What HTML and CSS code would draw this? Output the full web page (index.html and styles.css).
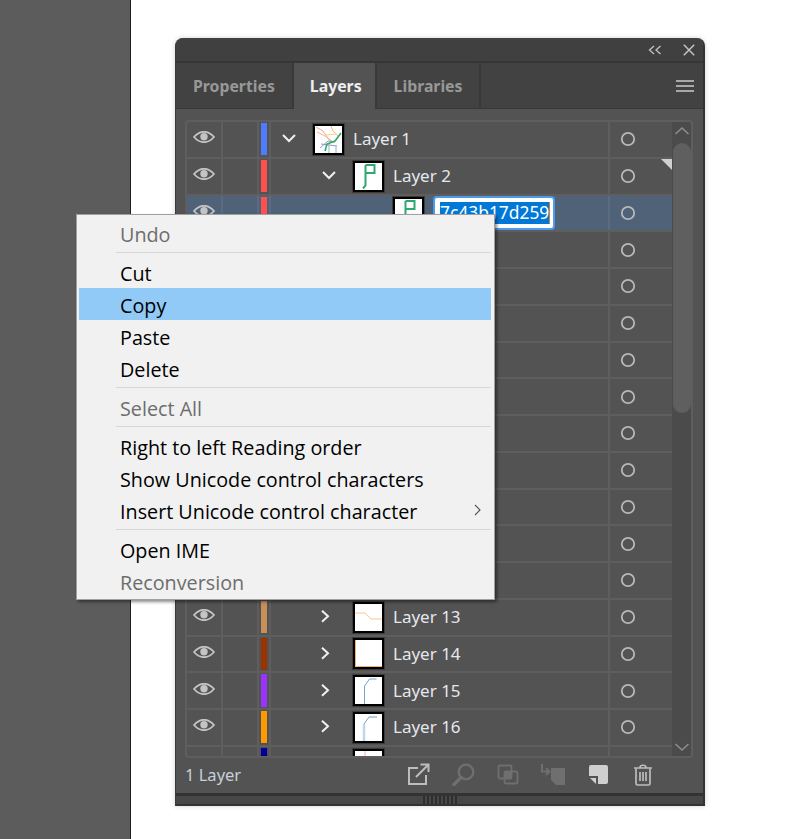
FILE: index.html
```html
<!DOCTYPE html>
<html lang="en">
<head>
  <meta charset="UTF-8">
  <meta name="viewport" content="width=device-width, initial-scale=1.0">
  <title>Layers panel</title>
  <link rel="stylesheet" href="styles.css">
</head>
<body>
  <svg class="defs" width="0" height="0">
    <symbol id="eye" viewBox="0 0 22 12">
      <path d="M1 6C5 1.500 8 .8 11 .8S17 1.500 21 6c-4 4.500-7 5.200-10 5.200S5 10.500 1 6z" fill="none" stroke="currentColor" stroke-width="1.800"/>
      <circle cx="11" cy="5.800" r="3.700" fill="currentColor"/>
    </symbol>
    <symbol id="target" viewBox="0 0 16 16">
      <circle cx="8" cy="8" r="6.200" fill="none" stroke="currentColor" stroke-width="1.800"/>
    </symbol>
    <symbol id="down" viewBox="0 0 24 14">
      <path d="M6 3l6 6 6-6" fill="none" stroke="currentColor" stroke-width="2"/>
    </symbol>
    <symbol id="right" viewBox="0 0 24 14">
      <path d="M5 .7l6 5.500-6 5.500" fill="none" stroke="currentColor" stroke-width="2"/>
    </symbol>
    <symbol id="flag" viewBox="0 0 27 27">
      <path d="M8 25.500l2.500-3V2M10.500 2h9v8h-9" fill="none" stroke="#2fa86c" stroke-width="2"/>
    </symbol>
  </svg>

  <aside class="sidebar"></aside>

  <main class="stage">
    <section class="panel">
      <header class="titlebar">
        <svg class="title-icon" width="14" height="10" viewBox="0 0 14 10"><path d="M6 1L1.500 5 6 9M12.500 1L8 5l4.500 4" fill="none" stroke="#c4c4c4" stroke-width="1.300"/></svg>
        <svg class="title-icon" width="12" height="12" viewBox="0 0 12 12"><path d="M.8.8l10.400 10.400M11.200.8L.8 11.200" fill="none" stroke="#c4c4c4" stroke-width="1.500"/></svg>
      </header>

      <nav class="tabs">
        <div class="tab">Properties</div>
        <div class="tab active">Layers</div>
        <div class="tab">Libraries</div>
        <div class="tab-menu"><span></span><span></span><span></span></div>
      </nav>

      <div class="panel-body">
        <div class="list">
          <div class="rows">
            <div class="row">
              <div class="cell eye"><svg><use href="#eye"/></svg></div>
              <div class="cell lock"></div>
              <div class="cell bar"><i style="background:#4f7cff"></i></div>
              <div class="cell name lvl-0">
                <svg class="twist"><use href="#down"/></svg>
                <div class="thumb">
                  <svg viewBox="0 0 27 27" fill="none" stroke-width="1">
                    <path d="M1 1l7 4 7 10 5 1" stroke="#f2a898"/>
                    <path d="M2 6l8 4 7 5" stroke="#f5b48a"/>
                    <path d="M16 0l2 5 5 5" stroke="#f7be6d"/>
                    <path d="M10 9l12-1" stroke="#f5d58a"/>
                    <path d="M5 22l8-7 7 1" stroke="#7fa8d8"/>
                    <path d="M6 18l16 2" stroke="#a58cc8"/>
                    <path d="M14 27v-9" stroke="#7fc8a8"/>
                    <path d="M21 27v-7" stroke="#7fb8d8"/>
                    <path d="M26 7l-6 8-8 3-2 7" stroke="#2fa86c" stroke-width="1.600"/>
                  </svg>
                </div>
                <span class="label">Layer 1</span>
              </div>
              <div class="cell target"><svg><use href="#target"/></svg></div>
            </div>
            <div class="row">
              <div class="cell eye"><svg><use href="#eye"/></svg></div>
              <div class="cell lock"></div>
              <div class="cell bar"><i style="background:#ff4f4f"></i></div>
              <div class="cell name lvl-1">
                <svg class="twist"><use href="#down"/></svg>
                <div class="thumb"><svg><use href="#flag"/></svg></div>
                <span class="label">Layer 2</span>
              </div>
              <div class="cell target has-art"><svg><use href="#target"/></svg></div>
            </div>
            <div class="row selected">
              <div class="cell eye"><svg><use href="#eye"/></svg></div>
              <div class="cell lock"></div>
              <div class="cell bar"><i style="background:#ff4f4f"></i></div>
              <div class="cell name lvl-2">
                <div class="thumb"><svg><use href="#flag"/></svg></div>
                <span class="rename"><span class="rename-text">7c43b17d259</span></span>
              </div>
              <div class="cell target"><svg><use href="#target"/></svg></div>
            </div>
            <div class="row"><div class="cell eye"></div><div class="cell lock"></div><div class="cell bar"></div><div class="cell name"></div><div class="cell target"><svg><use href="#target"/></svg></div></div>
            <div class="row"><div class="cell eye"></div><div class="cell lock"></div><div class="cell bar"></div><div class="cell name"></div><div class="cell target"><svg><use href="#target"/></svg></div></div>
            <div class="row"><div class="cell eye"></div><div class="cell lock"></div><div class="cell bar"></div><div class="cell name"></div><div class="cell target"><svg><use href="#target"/></svg></div></div>
            <div class="row"><div class="cell eye"></div><div class="cell lock"></div><div class="cell bar"></div><div class="cell name"></div><div class="cell target"><svg><use href="#target"/></svg></div></div>
            <div class="row"><div class="cell eye"></div><div class="cell lock"></div><div class="cell bar"></div><div class="cell name"></div><div class="cell target"><svg><use href="#target"/></svg></div></div>
            <div class="row"><div class="cell eye"></div><div class="cell lock"></div><div class="cell bar"></div><div class="cell name"></div><div class="cell target"><svg><use href="#target"/></svg></div></div>
            <div class="row"><div class="cell eye"></div><div class="cell lock"></div><div class="cell bar"></div><div class="cell name"></div><div class="cell target"><svg><use href="#target"/></svg></div></div>
            <div class="row"><div class="cell eye"></div><div class="cell lock"></div><div class="cell bar"></div><div class="cell name"></div><div class="cell target"><svg><use href="#target"/></svg></div></div>
            <div class="row"><div class="cell eye"></div><div class="cell lock"></div><div class="cell bar"></div><div class="cell name"></div><div class="cell target"><svg><use href="#target"/></svg></div></div>
            <div class="row"><div class="cell eye"></div><div class="cell lock"></div><div class="cell bar"></div><div class="cell name"></div><div class="cell target"><svg><use href="#target"/></svg></div></div>
            <div class="row">
              <div class="cell eye"><svg><use href="#eye"/></svg></div>
              <div class="cell lock"></div>
              <div class="cell bar"><i style="background:#c89058"></i></div>
              <div class="cell name lvl-1">
                <svg class="twist"><use href="#right"/></svg>
                <div class="thumb"><svg viewBox="0 0 27 27"><path d="M0 9h10l6 6h11" fill="none" stroke="#f5c98a"/></svg></div>
                <span class="label">Layer 13</span>
              </div>
              <div class="cell target"><svg><use href="#target"/></svg></div>
            </div>
            <div class="row">
              <div class="cell eye"><svg><use href="#eye"/></svg></div>
              <div class="cell lock"></div>
              <div class="cell bar"><i style="background:#993300"></i></div>
              <div class="cell name lvl-1">
                <svg class="twist"><use href="#right"/></svg>
                <div class="thumb"><svg viewBox="0 0 27 27"><path d="M.5 0v26.500H27" fill="none" stroke="#f5b461"/></svg></div>
                <span class="label">Layer 14</span>
              </div>
              <div class="cell target"><svg><use href="#target"/></svg></div>
            </div>
            <div class="row">
              <div class="cell eye"><svg><use href="#eye"/></svg></div>
              <div class="cell lock"></div>
              <div class="cell bar"><i style="background:#9933ff"></i></div>
              <div class="cell name lvl-1">
                <svg class="twist"><use href="#right"/></svg>
                <div class="thumb"><svg viewBox="0 0 27 27"><path d="M9.500 27V9l5-7h7" fill="none" stroke="#6fa3d0"/></svg></div>
                <span class="label">Layer 15</span>
              </div>
              <div class="cell target"><svg><use href="#target"/></svg></div>
            </div>
            <div class="row">
              <div class="cell eye"><svg><use href="#eye"/></svg></div>
              <div class="cell lock"></div>
              <div class="cell bar"><i style="background:#ff9900"></i></div>
              <div class="cell name lvl-1">
                <svg class="twist"><use href="#right"/></svg>
                <div class="thumb"><svg viewBox="0 0 27 27"><path d="M9 27V10" fill="none" stroke="#bcd6ea" stroke-width="2.500"/><path d="M9 10l5-7h8" fill="none" stroke="#6fa3d0"/></svg></div>
                <span class="label">Layer 16</span>
              </div>
              <div class="cell target"><svg><use href="#target"/></svg></div>
            </div>
            <div class="row">
              <div class="cell eye"><svg><use href="#eye"/></svg></div>
              <div class="cell lock"></div>
              <div class="cell bar"><i style="background:#000099"></i></div>
              <div class="cell name lvl-1">
                <svg class="twist"><use href="#right"/></svg>
                <div class="thumb"><svg viewBox="0 0 27 27"><path d="M10 0v27" fill="none" stroke="#efb0cf"/></svg></div>
              </div>
              <div class="cell target"><svg><use href="#target"/></svg></div>
            </div>
          </div>
          <div class="scrollbar">
            <svg class="scroll-arrow" width="16" height="10" viewBox="0 0 16 10"><path d="M1.500 8L8 2l6.500 6" fill="none" stroke="#8d8d8d" stroke-width="1.600"/></svg>
            <div class="scroll-thumb"></div>
            <svg class="scroll-arrow scroll-down" width="16" height="10" viewBox="0 0 16 10"><path d="M1.500 2L8 8l6.500-6" fill="none" stroke="#8d8d8d" stroke-width="1.600"/></svg>
          </div>
        </div>

        <footer class="footer">
          <span class="count">1 Layer</span>
          <div class="tools">
            <svg class="tool" viewBox="0 0 24 24" fill="none" stroke="#bdbdbd" stroke-width="2"><path d="M12 6H3v16h17v-9"/><path d="M10 15L22 3M14.500 2.500H22.500V10"/></svg>
            <svg class="tool" viewBox="0 0 24 24" fill="none" stroke="#6f6f6f"><circle cx="15" cy="10" r="7.300" stroke-width="2.300"/><path d="M10 15.500L3 22.500" stroke-width="3.400" stroke-linecap="round"/></svg>
            <svg class="tool" viewBox="0 0 24 24" fill="none" stroke="#6f6f6f" stroke-width="1.800"><rect x="2.500" y="3.500" width="13" height="13" rx="1.500"/><rect x="8.500" y="9.500" width="13" height="12" rx="1.500"/><rect x="8" y="9" width="8" height="8" fill="#6f6f6f" stroke="none"/></svg>
            <svg class="tool" viewBox="0 0 24 24"><path d="M10 6h14v17H15l-5-5z" fill="#6f6f6f"/><path d="M1 2v7.500h7M5 6l3.500 3.500L5 13" fill="none" stroke="#6f6f6f" stroke-width="2"/></svg>
            <svg class="tool" viewBox="0 0 24 24"><path d="M5 3h15a2 2 0 012 2v15a2 2 0 01-2 2H12V14H3V5a2 2 0 012-2z" fill="#cfcfcf"/><path d="M4 16h6v6z" fill="#cfcfcf"/></svg>
            <svg class="tool" viewBox="0 0 24 24" fill="none" stroke="#bdbdbd" stroke-width="1.700"><path d="M3 6h18M9 5.500c0-3 6-3 6 0"/><path d="M5 6.500v15a1.500 1.500 0 001.500 1.500h11a1.500 1.500 0 001.500-1.500v-15"/><path d="M9 10v9M12 10v9M15 10v9"/></svg>
          </div>
        </footer>
      </div>

      <div class="grip-bar"><div class="grip"></div></div>
    </section>
  </main>

  <div class="menu">
    <div class="menu-item disabled">Undo</div>
    <div class="menu-sep"></div>
    <div class="menu-item">Cut</div>
    <div class="menu-item hover">Copy</div>
    <div class="menu-item">Paste</div>
    <div class="menu-item">Delete</div>
    <div class="menu-sep"></div>
    <div class="menu-item disabled">Select All</div>
    <div class="menu-sep"></div>
    <div class="menu-item">Right to left Reading order</div>
    <div class="menu-item">Show Unicode control characters</div>
    <div class="menu-item">Insert Unicode control character
      <svg class="menu-arrow" width="7" height="12" viewBox="0 0 7 12"><path d="M1 1l5 5-5 5" fill="none" stroke="#555" stroke-width="1.100"/></svg>
    </div>
    <div class="menu-sep"></div>
    <div class="menu-item">Open IME</div>
    <div class="menu-item disabled">Reconversion</div>
  </div>
</body>
</html>
```

FILE: styles.css
```css
* {
  box-sizing: border-box;
}
body {
  margin: 0;
  height: 839px;
  display: flex;
  background: #fff;
  overflow: hidden;
  font-family: "Noto Sans", Arial, sans-serif;
}
.defs {
  position: absolute;
}
.sidebar {
  width: 131px;
  background: #5c5c5c;
  border-right: 1px solid #1e1e1e;
}
.stage {
  padding: 38px 0 0 44px;
}

/* panel */
.panel {
  width: 530px;
  height: 768px;
  display: flex;
  flex-direction: column;
  background: #535353;
  border-left: 1px solid #3a3a3a;
  border-right: 2px solid #333;
  border-radius: 8px 8px 0 0;
  box-shadow: 0 0 5px rgba(0, 0, 0, 0.18);
}
.titlebar {
  height: 25px;
  flex: none;
  display: flex;
  justify-content: flex-end;
  align-items: center;
  gap: 21px;
  padding: 0 8px 0 0;
  background: #404040;
  border-bottom: 2px solid #363636;
  border-radius: 8px 8px 0 0;
}
.tabs {
  height: 46px;
  flex: none;
  display: flex;
  background: #424242;
}
.tab {
  padding: 0 17px;
  display: flex;
  align-items: center;
  font-size: 15.800px;
  font-weight: 700;
  color: #989898;
  border-right: 2px solid #393939;
  border-bottom: 1px solid #383838;
}
.tab.active {
  padding: 0 13px 0 16px;
  background: #535353;
  color: #eee;
  border-bottom: none;
}
.tab-menu {
  flex: 1;
  display: flex;
  flex-direction: column;
  align-items: flex-end;
  justify-content: center;
  gap: 3px;
  padding-right: 9px;
  border-bottom: 1px solid #383838;
}
.tab-menu span {
  width: 18px;
  height: 2px;
  background: #a8a8a8;
}
.panel-body {
  flex: 1;
  padding: 11px 10px 0 9px;
  display: flex;
  flex-direction: column;
}

/* layer list */
.list {
  height: 638px;
  flex: none;
  display: flex;
  border: 2px solid #5e5e5e;
  border-radius: 4px;
  overflow: hidden;
}
.rows {
  width: 485px;
  flex: none;
}
.row {
  height: 36.750px;
  display: grid;
  grid-template-columns: 36px 36px 12px 339px 62px;
  border-bottom: 2px solid #5e5e5e;
}
.row.selected {
  background: #4f6277;
}
.cell {
  border-right: 2px solid #5e5e5e;
  display: flex;
  align-items: center;
  min-width: 0;
}
.row.selected .cell {
  border-right-color: #5b6c80;
}
.cell.eye {
  justify-content: center;
  padding: 0 0 4px 0;
  color: #c4c4c4;
}
.cell.eye svg {
  width: 22px;
  height: 12px;
}
.cell.bar {
  padding: 1px 0 1.500px 2px;
  align-items: stretch;
}
.cell.bar i {
  width: 6px;
  display: block;
}
.cell.target {
  position: relative;
  border-right: none;
  padding-left: 10px;
  color: #b8b8b8;
}
.cell.target svg {
  width: 16px;
  height: 16px;
}
.has-art::after {
  content: "";
  position: absolute;
  top: 0;
  right: 0;
  border-style: solid;
  border-width: 0 11px 11px 0;
  border-color: transparent #d0d0d0 transparent transparent;
}
.name.lvl-0 {
  padding-left: 6px;
}
.name.lvl-1 {
  padding-left: 46px;
}
.name.lvl-2 {
  padding-left: 122px;
}
.twist {
  width: 24px;
  height: 14px;
  flex: none;
  margin-right: 12px;
  color: #f0f0f0;
}
.thumb {
  width: 31px;
  height: 31px;
  flex: none;
  background: #fff;
  border: 2px solid #000;
  outline: 1px solid #3c3c3c;
}
.thumb svg {
  width: 27px;
  height: 27px;
  display: block;
}
.label {
  margin: 0 0 1px 9px;
  font-size: 17px;
  color: #e4e8ee;
  white-space: nowrap;
}
.rename {
  margin-left: 9px;
  width: 122px;
  height: 34px;
  padding: 3px 3px 3px 5px;
  display: flex;
  align-items: center;
  background: #fff;
  border: 2px solid #4c9bea;
  border-radius: 4px;
  overflow: hidden;
}
.rename-text {
  height: 22px;
  line-height: 21px;
  background: #0078d7;
  border-right: 1px solid #e07a20;
  color: #fff;
  font-size: 17.400px;
  white-space: nowrap;
}

/* scrollbar */
.scrollbar {
  flex: 1;
  display: flex;
  flex-direction: column;
  align-items: center;
  background: #4b4b4b;
  padding-top: 4px;
}
.scroll-thumb {
  width: 18px;
  height: 270px;
  margin-top: 7px;
  background: #5f5f5f;
  border-radius: 9px;
}
.scroll-down {
  margin-top: auto;
  margin-bottom: 4px;
}

/* footer */
.footer {
  height: 35px;
  flex: none;
  display: flex;
  align-items: center;
  justify-content: space-between;
  padding: 0 38px 3px 0;
  font-size: 16.500px;
  color: #c8d0d8;
}
.tools {
  display: flex;
  gap: 21px;
}
.tool {
  width: 24px;
  height: 24px;
}
.grip-bar {
  height: 13px;
  flex: none;
  background: #474747;
  border-top: 3px solid #333;
  border-bottom: 2px solid #333;
  display: flex;
  justify-content: center;
}
.grip {
  width: 34px;
  height: 8px;
  background: repeating-linear-gradient(90deg, #2e2e2e 0 2px, transparent 2px 4px);
}

/* context menu over the panel */
.menu {
  position: absolute;
  left: 76px;
  top: 214px;
  width: 419px;
  height: 386px;
  padding: 2px 3px 2px 2px;
  background: #f1f1f1;
  border: 1px solid #a0a0a0;
  box-shadow: 2px 2px 3px rgba(0, 0, 0, 0.45);
  font-family: "Open Sans", Arial, sans-serif;
  font-size: 19.750px;
}
.menu-item {
  height: 32px;
  padding-left: 41px;
  padding-top: 2px;
  display: flex;
  align-items: center;
  color: #000;
  position: relative;
}
.menu-item.hover {
  background: #91c9f7;
}
.menu-item.disabled {
  color: #6d6d6d;
}
.menu-sep {
  height: 7px;
  padding-top: 3px;
  margin-left: 37px;
}
.menu-sep::before {
  content: "";
  display: block;
  height: 1px;
  background: #d7d7d7;
}
.menu-arrow {
  position: absolute;
  right: 10px;
  top: 10px;
}
```
